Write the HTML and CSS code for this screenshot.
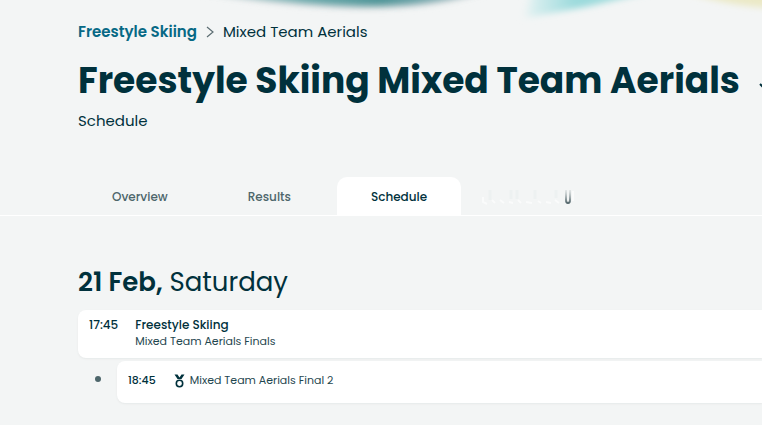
FILE: index.html
```html
<!DOCTYPE html>
<html lang="en">
  <head>
    <meta charset="UTF-8" />
    <meta name="viewport" content="width=device-width, initial-scale=1" />
    <title>Freestyle Skiing Mixed Team Aerials - Schedule</title>
    <link rel="stylesheet" href="styles.css">
  </head>

  <body>
    <svg class="hero-art" viewBox="0 0 762 40" preserveAspectRatio="none" aria-hidden="true">
      <defs>
        <filter id="soft" x="-20%" y="-100%" width="140%" height="300%">
          <feGaussianBlur stdDeviation="5 3" />
        </filter>
        <linearGradient id="teal">
          <stop offset="0" stop-color="#cfe3e3" />
          <stop offset="0.4" stop-color="#6aa9ab" />
          <stop offset="0.65" stop-color="#4f9598" />
          <stop offset="1" stop-color="#9fbcc4" />
        </linearGradient>
        <linearGradient id="aqua">
          <stop offset="0" stop-color="#e3f2f2" />
          <stop offset="0.4" stop-color="#9bdadc" />
          <stop offset="1" stop-color="#a5dcdc" />
        </linearGradient>
      </defs>
      <path d="M190 -10 H490 Q440 10 350 9 Q260 5 190 -10Z" fill="#d9dddf" filter="url(#soft)" />
      <path d="M180 -12 H490 Q440 6 365 6 Q280 4 180 -12Z" fill="url(#teal)" filter="url(#soft)" />
      <path d="M532 -8 H650 L590 6 L526 18Z" fill="url(#aqua)" filter="url(#soft)" />
      <path d="M680 -10 H790 V9 Q730 8 680 -10Z" fill="#ebe9c6" filter="url(#soft)" />
    </svg>

    <header class="header">
      <nav class="breadcrumb" aria-label="Breadcrumb">
        <a href="#">Freestyle Skiing</a>
        <svg width="8" height="12" viewBox="0 0 8 12" aria-hidden="true">
          <path d="M1 1l6 5-6 5" fill="none" stroke="#5c6d72" stroke-width="1.2" />
        </svg>
        <span>Mixed Team Aerials</span>
      </nav>
      <div class="title-row">
        <h1>Freestyle Skiing Mixed Team Aerials</h1>
        <button type="button" class="toggle" aria-label="Change event">
          <svg width="14" height="9" viewBox="0 0 14 9" aria-hidden="true">
            <path d="M1 1l6 6 6-6" fill="none" stroke="#00313c" stroke-width="2" />
          </svg>
        </button>
      </div>
      <p class="subtitle">Schedule</p>
    </header>

    <nav class="tabs" aria-label="Sections">
      <a href="#" class="tab">Overview</a>
      <a href="#" class="tab">Results</a>
      <a href="#" class="tab active" aria-current="page">Schedule</a>
      <a href="#" class="tab-fading" aria-label="More">
        <svg width="100" height="22" viewBox="0 0 100 22" aria-hidden="true">
          <defs>
            <linearGradient id="fade" x1="0" y1="0" x2="0" y2="1">
              <stop offset="0" stop-color="#c9d0d1" stop-opacity="0.4" />
              <stop offset="1" stop-color="#52656a" />
            </linearGradient>
          </defs>
          <path d="M10 5v10M31 5v9M37 5v9M55 5v9M76 5v8" stroke="#edf1f1" stroke-width="3" />
          <path d="M3 12v5l4 2M12 15l3 3M20 15l4 3M29 17l4 1M38 15l3 3M46 17l6 1M58 16l3 2M66 17l5 1M75 15l4 3M93 6v10" fill="none" stroke="#fff" stroke-width="2" stroke-opacity="0.6" />
          <path d="M86 5v10q0 3 2 3t2-3V5" fill="none" stroke="url(#fade)" stroke-width="2" />
        </svg>
      </a>
    </nav>

    <main class="schedule">
      <h2><strong>21 Feb,</strong> Saturday</h2>

      <article class="event">
        <time datetime="17:45">17:45</time>
        <div>
          <h3>Freestyle Skiing</h3>
          <p>Mixed Team Aerials Finals</p>
        </div>
      </article>

      <div class="sub-row">
        <span class="dot"></span>
        <article class="sub-event">
          <time datetime="18:45">18:45</time>
          <svg class="medal" width="11" height="14" viewBox="0 0 11 14" aria-hidden="true">
            <path d="M0.5 0.5h3l2 3 2-3h3L7.5 5h-4z" fill="#00313c" />
            <circle cx="5.5" cy="9.5" r="3.2" fill="#fff" stroke="#00313c" stroke-width="1.6" />
          </svg>
          <p>Mixed Team Aerials Final 2</p>
        </article>
      </div>
    </main>
  </body>
</html>
```

FILE: styles.css
```css
* {
  box-sizing: border-box;
}

body {
  margin: 0;
  background: #f3f5f5;
  color: #00313c;
  font-family: Poppins, Inter, sans-serif;
  overflow-x: hidden;
}

h1,
h2,
h3,
p {
  margin: 0;
}

a {
  text-decoration: none;
}

/* decoration behind the header */
.hero-art {
  position: absolute;
  top: 0;
  left: 0;
  width: 100%;
  height: 40px;
  z-index: -1;
}

.header {
  padding: 20px 0 0 78px;
}

.breadcrumb {
  display: flex;
  align-items: center;
  gap: 9px;
  font-size: 15px;
  line-height: 24px;
}

.breadcrumb a {
  color: #076985;
  font-weight: 600;
}

.title-row {
  display: flex;
  align-items: center;
  gap: 19px;
  margin-top: 13px;
}

h1 {
  font-size: 36px;
  line-height: 48px;
  font-weight: 700;
  white-space: nowrap;
}

.toggle {
  display: flex;
  padding: 12px 0 0;
  border: 0;
  background: none;
}

.subtitle {
  margin-top: 4px;
  font-size: 15px;
  line-height: 24px;
}

.tabs {
  display: flex;
  gap: 12px;
  margin-top: 44px;
  padding-left: 78px;
  border-bottom: 1px solid #fff;
}

.tab {
  padding: 1px 34px 0;
  border-radius: 10px 10px 0 0;
  color: #4d666b;
  font-size: 12px;
  line-height: 37px;
  font-weight: 500;
}

.tab.active {
  background: #fff;
  color: #00313c;
}

.tab-fading {
  display: flex;
  align-items: center;
  padding-left: 7px;
}

.schedule {
  padding: 46px 0 20px 78px;
}

h2 {
  font-size: 26px;
  line-height: 40px;
  font-weight: 400;
}

h2 strong {
  font-weight: 600;
}

.event {
  display: flex;
  gap: 17px;
  margin-top: 8px;
  padding: 6px 11px 9px;
  border-radius: 8px 0 0 8px;
  background: #fff;
  box-shadow: 0 1px 2px #e6e9e9;
}

.event time {
  font-size: 12px;
  line-height: 18px;
  font-weight: 500;
}

h3 {
  font-size: 12px;
  line-height: 18px;
  font-weight: 500;
}

.event p,
.sub-event {
  font-size: 11px;
  line-height: 15px;
}

.event p,
.sub-event p {
  color: #1f4750;
}

.sub-row {
  display: flex;
  align-items: center;
  margin-top: 3px;
}

.dot {
  width: 6px;
  height: 6px;
  margin: 0 16px 6px 17px;
  border-radius: 50%;
  background: #4d666b;
}

.sub-event {
  display: flex;
  flex: 1;
  align-items: center;
  padding: 12px 11px 15px;
  border-radius: 8px 0 0 8px;
  background: #fff;
  box-shadow: 0 1px 2px #e6e9e9;
}

.sub-event time {
  font-weight: 500;
}

.medal {
  margin: 0 5px 0 18px;
}
```
